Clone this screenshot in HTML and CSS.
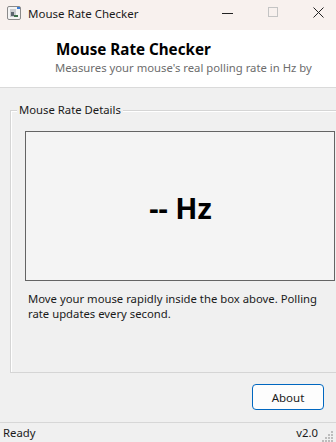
FILE: index.html
```html
<!DOCTYPE html>
<html>
<head>
<meta charset="utf-8">
<link rel="stylesheet" href="styles.css">
</head>
<body>
<div class="window">
  <div class="titlebar">
    <svg class="app-icon" width="14" height="14" viewBox="0 0 14 14">
      <rect x="0.5" y="0.5" width="13" height="13" rx="1.5" fill="#f4f4f4" stroke="#8a8a8a"/>
      <rect x="3" y="3" width="6" height="8" fill="#c9ccd0"/>
      <rect x="4" y="6" width="3" height="4" fill="#5d6670"/>
      <rect x="7" y="9" width="4" height="2" fill="#3b6e4a"/>
      <rect x="10" y="1" width="3" height="2" fill="#3a7bd5"/>
    </svg>
    <span class="title-text">Mouse Rate Checker</span>
    <div class="controls">
      <svg class="ctl" width="46" height="30" viewBox="0 0 46 30"><path d="M18 13.5h11" stroke="#222" stroke-width="1"/></svg>
      <svg class="ctl" width="46" height="30" viewBox="0 0 46 30"><rect x="18.5" y="7.5" width="9" height="9" fill="none" stroke="#c4c4c4"/></svg>
      <svg class="ctl" width="46" height="30" viewBox="0 0 46 30"><path d="M17.5 7.5l10 10M27.5 7.5l-10 10" stroke="#222" stroke-width="1"/></svg>
    </div>
  </div>
  <div class="header">
    <div class="header-title">Mouse Rate Checker</div>
    <div class="header-sub">Measures your mouse's real polling rate in Hz by</div>
  </div>
  <div class="content">
    <div class="group">
      <div class="group-label">Mouse Rate Details</div>
      <div class="rate-box"><span class="rate-value">-- Hz</span></div>
      <p class="hint">Move your mouse rapidly inside the box above. Polling rate updates every second.</p>
    </div>
    <div class="actions">
      <button class="btn">About</button>
    </div>
  </div>
  <div class="statusbar">
    <span class="status">Ready</span>
    <span class="version">v2.0</span>
    <svg class="grip" width="12" height="12" viewBox="0 0 12 12">
      <g fill="#bdbdbd">
        <rect x="9" y="1" width="2" height="2"/>
        <rect x="6" y="4" width="2" height="2"/><rect x="9" y="4" width="2" height="2"/>
        <rect x="3" y="7" width="2" height="2"/><rect x="6" y="7" width="2" height="2"/><rect x="9" y="7" width="2" height="2"/>
        <rect x="0" y="10" width="2" height="2"/><rect x="3" y="10" width="2" height="2"/><rect x="6" y="10" width="2" height="2"/><rect x="9" y="10" width="2" height="2"/>
      </g>
    </svg>
  </div>
</div>
</body>
</html>
```

FILE: styles.css
```css
html, body {
  margin: 0;
  padding: 0;
}
body {
  width: 336px;
  height: 442px;
  overflow: hidden;
  font-family: "Noto Sans", "Open Sans", sans-serif;
  font-size: 11.3px;
  color: #000;
  background: #f0f0f0;
}
.window {
  display: flex;
  flex-direction: column;
  height: 442px;
}
.titlebar {
  height: 30px;
  flex: none;
  display: flex;
  align-items: center;
  background: #f8f1ee;
}
.app-icon {
  margin-left: 7px;
  margin-top: -4px;
}
.title-text {
  margin-left: 7px;
  margin-top: -4px;
  font-size: 11.5px;
  color: #1a1a1a;
}
.controls {
  margin-left: auto;
  display: flex;
  margin-right: -6px;
}
.ctl {
  display: block;
}
.header {
  height: 57px;
  flex: none;
  background: #ffffff;
  border-bottom: 1px solid #dadada;
  padding-left: 56px;
  box-sizing: content-box;
}
.header-title {
  font-size: 15.2px;
  font-weight: bold;
  line-height: 20px;
  padding-top: 9px;
}
.header-sub {
  font-size: 11.3px;
  color: #6d6d6d;
  line-height: 16px;
  margin-top: 1px;
  margin-left: -1px;
  white-space: nowrap;
}
.content {
  flex: 1;
  display: flex;
  flex-direction: column;
}
.group {
  margin-top: 22px;
  margin-left: 10px;
  width: 340px;
  height: 263px;
  box-sizing: border-box;
  border: 1px solid #d5d5d5;
  border-right: none;
  box-shadow: inset 1px 1px 0 #ffffff;
  position: relative;
  padding: 20px 0 0 14px;
}
.group-label {
  position: absolute;
  top: -9px;
  left: 6px;
  padding: 0 2px;
  background: #f0f0f0;
  line-height: 16px;
  color: #1a1a1a;
}
.rate-box {
  width: 310px;
  height: 150px;
  box-sizing: border-box;
  border: 1px solid #646464;
  background: #f4f4f4;
  display: flex;
  align-items: center;
  justify-content: center;
}
.rate-value {
  font-size: 29px;
  font-weight: bold;
  line-height: 34px;
  margin-top: 4px;
  margin-left: 1px;
}
.hint {
  margin: 10px 0 0 3px;
  width: 305px;
  line-height: 15px;
  color: #1a1a1a;
}
.actions {
  display: flex;
  justify-content: flex-end;
  padding: 11px 12px 0 0;
}
.btn {
  width: 72px;
  height: 26px;
  box-sizing: border-box;
  border: 1px solid #0067c0;
  border-radius: 4px;
  background: #fdfdfd;
  font-family: inherit;
  font-size: 11.5px;
  color: #1a1a1a;
  padding: 0;
}
.statusbar {
  height: 19px;
  flex: none;
  border-top: 1px solid #d7d7d7;
  display: flex;
  align-items: center;
  padding-left: 3px;
  line-height: 16px;
}
.status {
  color: #1a1a1a;
}
.version {
  margin-left: auto;
  margin-right: 4px;
  color: #1a1a1a;
}
.grip {
  margin-right: 2px;
  margin-top: 6px;
}
```
